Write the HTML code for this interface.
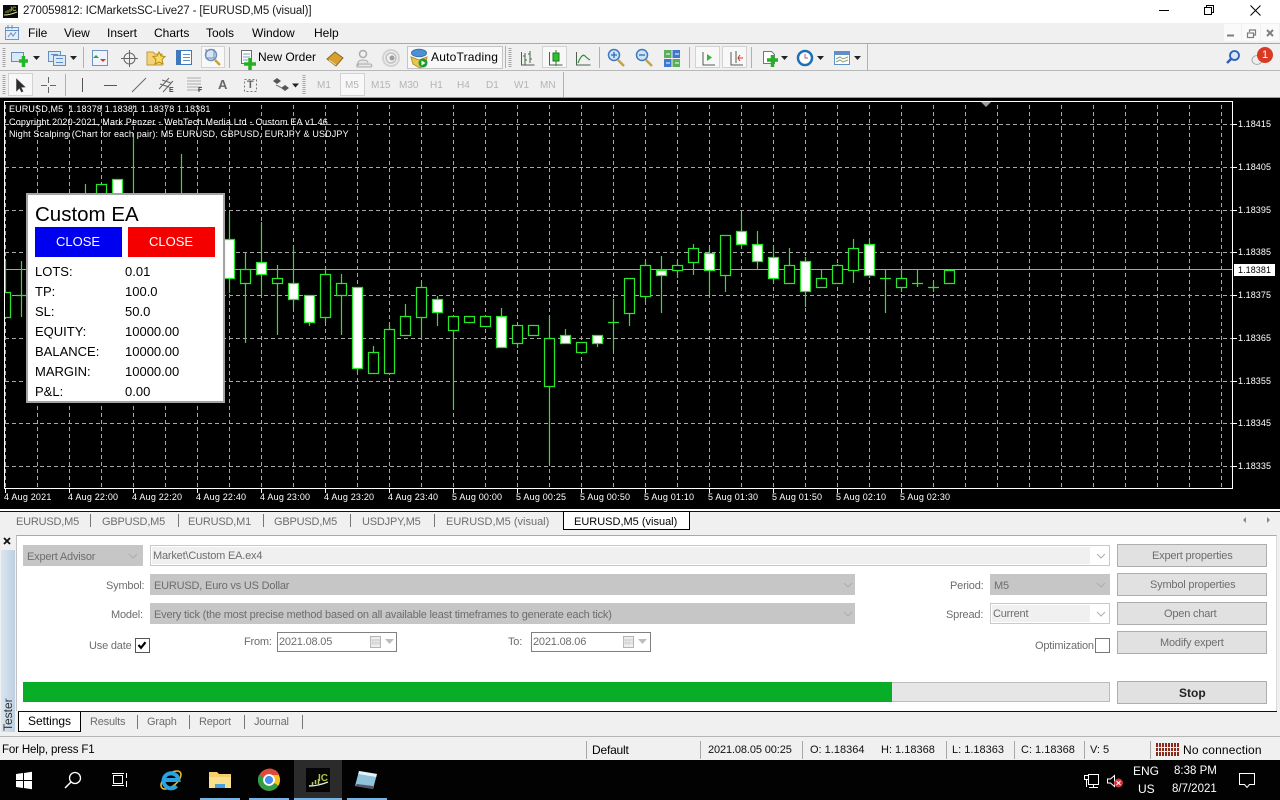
<!DOCTYPE html>
<html><head><meta charset="utf-8"><title>MT4</title>
<style>
html,body{margin:0;padding:0;background:#f0f0f0}
#p{position:relative;width:1280px;height:800px;overflow:hidden;font-family:"Liberation Sans",sans-serif;font-size:12px;color:#000;background:#f0f0f0}
#p div,#p svg{position:absolute}
i{position:absolute;font-style:normal;white-space:pre;line-height:14px}
.c{font-size:9px;color:#fff;letter-spacing:.07px}
.t{font-size:9px;color:#fff;letter-spacing:.2px}
.g{color:#6d6d6d;font-size:11px;letter-spacing:-.19px;line-height:16px}
.d{font-size:11px;color:#111;line-height:16px}
.m{color:#b4b4b4;font-size:10px}
.s{background:#c6c6c6}
.w{background:#fff;border:1px solid #c9c9c9;box-sizing:border-box}
.f{background:#f0f0f0}
.b{background:#e1e1e1;border:1px solid #adadad;box-sizing:border-box;left:1117px;width:150px;height:23px}
.v{width:1px;background:#a8a8a8}
.e{font-size:13px;color:#000;line-height:18px}
.pb{background:#f8f8f8;border:1px solid #d2d2d2;box-sizing:border-box}
</style></head><body><div id="p">

<div style="left:0;top:0;width:1280px;height:23px;background:#fff"></div>
<div style="left:0;top:43px;width:1280px;height:1px;background:#a9a9a9"></div>
<div style="left:0;top:70px;width:1280px;height:1px;background:#b9b9b9"></div>
<div style="left:0;top:97px;width:1280px;height:1px;background:#9a9a9a"></div>
<div style="left:0;top:98px;width:1280px;height:411px;background:#000"></div>
<div style="left:0;top:509px;width:1280px;height:2px;background:#fff"></div>
<div style="left:0;top:511px;width:1280px;height:1px;background:#111"></div>
<div style="left:16px;top:535px;width:1261px;height:176px;background:#fff;border-top:1px solid #a9a9a9;border-left:1px solid #c2c2c2;border-right:1px solid #dcdcdc;box-sizing:border-box"></div>
<div style="left:1px;top:550px;width:14px;height:182px;background:linear-gradient(90deg,#d9e5f1,#bfd0e2)"></div>
<div style="left:18px;top:711px;width:1259px;height:1px;background:#111"></div>
<div style="left:0;top:736px;width:1280px;height:1px;background:#b5b5b5"></div>
<div style="left:0;top:760px;width:1280px;height:40px;background:#020202"></div>

<!-- pressed buttons -->
<div class="pb" style="left:201px;top:46px;width:24px;height:22px"></div>
<div class="pb" style="left:407px;top:46px;width:96px;height:23px;border-color:#c4c4c4"></div>
<div class="pb" style="left:542px;top:46px;width:25px;height:22px"></div>
<div class="pb" style="left:695px;top:46px;width:25px;height:22px"></div>
<div class="pb" style="left:722px;top:46px;width:25px;height:22px"></div>
<div class="pb" style="left:8px;top:73px;width:25px;height:23px"></div>
<div class="pb" style="left:340px;top:73px;width:25px;height:23px"></div>
<div style="left:1224px;top:24px;width:17px;height:17px;background:#fafafa"></div>
<div style="left:1242px;top:24px;width:18px;height:17px;background:#fafafa"></div>
<div style="left:1261px;top:24px;width:18px;height:17px;background:#fafafa"></div>

<!-- chart and icons -->
<svg width="1280" height="800" viewBox="0 0 1280 800" style="left:0;top:0">
<defs><pattern id="vg" x="5" y="0" width="32" height="7" patternUnits="userSpaceOnUse"><rect x="0" y="0" width="1" height="4" fill="#a8a8a8"/></pattern></defs>
<g shape-rendering="crispEdges">
<rect x="5" y="102" width="1224" height="386" fill="url(#vg)"/>
<path d="M5 124.500H1232M5 167.500H1232M5 210.500H1232M5 252.500H1232M5 295.500H1232M5 338.500H1232M5 381.500H1232M5 423.500H1232M5 466.500H1232" stroke="#a8a8a8" stroke-dasharray="4 3" fill="none"/>
<path d="M5 269.500H1232" stroke="#a3a3a3"/>
</g>
<g fill="none" stroke="#28e628" stroke-width="1.200">
<path d="M5.500 261V292M21.500 261V317M16 295.500h11M85.500 184V200M133.500 136V200M181.500 154V200M229.500 213V293M245.500 253V343M261.500 222V295M277.500 265V335M293.500 246V308M309.500 295V326M325.500 267V322M341.500 274V335M357.500 287V373M373.500 346V373M389.500 323V373M405.500 304V335M421.500 282V338M437.500 296V326M453.500 316V409M501.500 308V347M517.500 325V348M549.500 316V464M565.500 329V343M597.500 335V347M613.500 299V350M608 322.500h11M629.500 278V326M645.500 261V302M661.500 256V313M677.500 261V278M693.500 244V275M709.500 247V295M725.500 235V292M741.500 214V249M757.500 231V270M773.500 246V283M789.500 248V283M805.500 257V307M821.500 270V287M837.500 264V283M853.500 239V283M869.500 239V278M885.500 270V313M880 278.500h11M901.500 270V292M917.500 270V287M912 283.500h11M933.500 281V292M928 287.500h11"/>
<path fill="#000" d="M0.500 292.500h10v25h-10zM96.500 184.500h10v30h-10zM240.500 269.500h10v14h-10zM272.500 278.500h10v5h-10zM320.500 274.500h10v43h-10zM336.500 283.500h10v12h-10zM368.500 352.500h10v21h-10zM384.500 329.500h10v44h-10zM400.500 316.500h10v19h-10zM416.500 287.500h10v30h-10zM448.500 316.500h10v14h-10zM464.500 316.500h10v6h-10zM480.500 316.500h10v10h-10zM512.500 325.500h10v18h-10zM528.500 325.500h10v10h-10zM544.500 338.500h10v48h-10zM576.500 342.500h10v10h-10zM624.500 278.500h10v35h-10zM640.500 265.500h10v31h-10zM672.500 265.500h10v5h-10zM688.500 248.500h10v14h-10zM720.500 235.500h10v40h-10zM784.500 265.500h10v18h-10zM816.500 278.500h10v9h-10zM832.500 265.500h10v18h-10zM848.500 248.500h10v22h-10zM896.500 278.500h10v9h-10zM944.500 270.500h10v13h-10z"/>
<path fill="#fff" d="M112.500 179.500h10v30h-10zM224.500 239.500h10v39h-10zM256.500 262.500h10v12h-10zM288.500 283.500h10v16h-10zM304.500 295.500h10v27h-10zM352.500 287.500h10v81h-10zM432.500 299.500h10v13h-10zM496.500 316.500h10v31h-10zM560.500 335.500h10v8h-10zM592.500 335.500h10v8h-10zM656.500 270.500h10v5h-10zM704.500 253.500h10v17h-10zM736.500 231.500h10v13h-10zM752.500 244.500h10v17h-10zM768.500 257.500h10v21h-10zM800.500 261.500h10v30h-10zM864.500 244.500h10v31h-10z"/>
</g>
<g shape-rendering="crispEdges">
<rect x="0" y="98" width="4" height="411" fill="#000"/>
<rect x="4.500" y="101.500" width="1228" height="387" fill="none" stroke="#fff"/>
<path d="M1233 124.500h4M1233 167.500h4M1233 210.500h4M1233 252.500h4M1233 295.500h4M1233 338.500h4M1233 381.500h4M1233 423.500h4M1233 466.500h4M5.500 489v4M69.500 489v4M133.500 489v4M197.500 489v4M261.500 489v4M325.500 489v4M389.500 489v4M453.500 489v4M517.500 489v4M581.500 489v4M645.500 489v4M709.500 489v4M773.500 489v4M837.500 489v4M901.500 489v4" stroke="#fff"/>
</g>
<path d="M981 102h10l-5 5z" fill="#9a9a9a"/>

<!-- title icon -->
<rect x="3" y="5" width="15" height="13" fill="#0a0a0a"/>
<path d="M4 15q6 0 13-3" stroke="#cfd8a0" fill="none"/>
<path d="M6 13v-2M8 13v-3M10 12V9" stroke="#8aa03a"/>
<text x="10.500" y="11" font-size="6" font-weight="bold" fill="#a8b832" font-family="Liberation Sans">IC</text>
<!-- menu icon -->
<rect x="5.500" y="27.500" width="13" height="12" fill="#e4eefa" stroke="#6f97c6"/>
<path d="M5 30.500h14M8 25v4M12 25v4M8 37l3-4 2 3 3-4" stroke="#5e8ec5" fill="none"/>

<!-- window controls -->
<g shape-rendering="crispEdges" stroke="#000" fill="none">
<path d="M1159 10.500h10"/>
<rect x="1204.500" y="7.500" width="7" height="7"/>
<path d="M1206.500 7.500v-2h7v7h-2"/>
</g>
<path d="M1250.500 5.500l10 10M1260.500 5.500l-10 10" stroke="#000" fill="none"/>
<g fill="none" stroke="#7d7d7d">
<path d="M1227 35.500h7" stroke-width="2"/>
<rect x="1247.500" y="33" width="6" height="4.500" stroke-width="1.200"/>
<path d="M1249.500 32v-2h6v5h-1.500" stroke-width="1.200"/>
<path d="M1267 30l6 6M1273 30l-6 6" stroke-width="2"/>
</g>

<!-- grippers and separators -->
<g shape-rendering="crispEdges">
<path d="M4 48v19M510 48v19M4 75v20M304 75v20" stroke="#a5a5a5" stroke-dasharray="1 1" stroke-width="3"/>
<path d="M83.500 47v21M229.500 47v21M505.500 46v22M599.500 47v21M689.500 47v21M751.500 47v21M867.500 44v26M65.500 74v22M563.500 72v25" stroke="#b0b0b0"/>
</g>

<!-- toolbar 1 -->
<rect x="11.500" y="52.500" width="12" height="9" fill="#dbe8f6" stroke="#5f8fc4"/>
<path d="M19 61h9M23.500 56v11" stroke="#26b526" stroke-width="3.500"/>
<path d="M33 56h7l-3.500 4zM70 56h7l-3.500 4z" fill="#222"/>
<rect x="48.500" y="51.500" width="12" height="10" fill="#dbe8f6" stroke="#5f8fc4"/>
<rect x="53.500" y="55.500" width="12" height="10" fill="#dbe8f6" stroke="#5f8fc4"/>
<path d="M51 54.500h7M56 58.500h7M56 62.500h7" stroke="#5f8fc4"/>
<rect x="92.500" y="50.500" width="15" height="15" fill="#eef4fb" stroke="#6e95c2"/>
<path d="M96 55l3 3h-6z" fill="#3ba03b"/><path d="M103 62l-3-3h6z" fill="#d33"/>
<circle cx="129.500" cy="58.500" r="5.500" fill="none" stroke="#666"/>
<path d="M129.500 50v17M121 58.500h17" stroke="#666"/>
<path d="M147 52h6l2 2h7v11h-15z" fill="#f3d27a" stroke="#c49a34"/>
<path d="M159 52l2 4 4 .5-3 3 1 4.500-4-2-4 2 1-4.500-3-3 4-.5z" fill="#f8dc60" stroke="#b58b16"/>
<rect x="176.500" y="50.500" width="15" height="14" fill="#fff" stroke="#3f78bd"/>
<rect x="177" y="51" width="4" height="13" fill="#3f78bd"/>
<path d="M183 54.500h7M183 57.500h7M183 60.500h7" stroke="#5f8fc4"/>
<circle cx="211" cy="55" r="5.500" fill="#d7e6f6" stroke="#6f8fb5" stroke-width="1.500"/>
<path d="M206 49v9h8v-9" fill="none" stroke="#6f8fb5"/>
<path d="M215 60l5 5" stroke="#c9a040" stroke-width="2.500"/>
<rect x="241.500" y="50.500" width="10" height="13" fill="#fff" stroke="#6d6d6d"/>
<path d="M243 54h7M243 57h7M243 60h5" stroke="#7d9fc5"/>
<path d="M244 64h12M250 58v12" stroke="#24b024" stroke-width="3.500"/>
<path d="M327 59l8-7 8 6-7 8z" fill="#d8a02d" stroke="#8a6a20"/>
<path d="M329 60l7 5" stroke="#f4dca0"/>
<circle cx="363" cy="54" r="3.500" fill="none" stroke="#aaa" stroke-width="1.500"/>
<path d="M358 66v-3q0-3 5-3t5 3M357 64h14q2 2 0 3h-14z" fill="#e6e6e6" stroke="#ababab"/>
<circle cx="391" cy="58" r="8" fill="none" stroke="#d2d2d2" stroke-width="2"/>
<circle cx="391" cy="58" r="5" fill="none" stroke="#c0c0c0" stroke-width="1.500"/>
<circle cx="392" cy="58" r="2.500" fill="#9c9c9c"/>
<!-- autotrading -->
<path d="M411 57l8 3 8-3-1 7-6 4-7-4z" fill="#e6c84e" stroke="#b8942a"/>
<ellipse cx="419" cy="53" rx="7.500" ry="3.800" fill="#4d90d1" stroke="#3a74ad"/>
<circle cx="423" cy="63" r="4.500" fill="#1e9a35"/>
<path d="M421.500 60.500v5l4-2.500z" fill="#fff"/>
<!-- charts -->
<g fill="none" stroke="#4e5f4e">
<path d="M521.500 52v13h13M525 65v-12M530 63v-12"/>
<path d="M549.500 52v13h13M576.500 52v13h14"/>
<path d="M703 52v13h12M731 52v13h12"/>
</g>
<path d="M523 56h2M525 60h2M528 54h2M530 59h2M556 50v16" stroke="#2e7d2e" fill="none"/>
<rect x="553" y="53" width="6" height="8" fill="#2fc02f" stroke="#1c7a1c"/>
<path d="M578 63q4-10 7-7t5 4" stroke="#2e8b2e" fill="none" stroke-width="1.200"/>
<circle cx="614" cy="55" r="5.500" fill="#cfe3f8" stroke="#3f78bd" stroke-width="1.500"/>
<path d="M611 55h6M614 52v6" stroke="#2d6bb5" stroke-width="1.300"/>
<path d="M618 60l6 6" stroke="#c9a040" stroke-width="2.500"/>
<circle cx="642" cy="55" r="5.500" fill="#cfe3f8" stroke="#3f78bd" stroke-width="1.500"/>
<path d="M639 55h6" stroke="#2d6bb5" stroke-width="1.300"/>
<path d="M646 60l6 6" stroke="#c9a040" stroke-width="2.500"/>
<g shape-rendering="crispEdges">
<rect x="664" y="50" width="7.500" height="8" fill="#58b058"/><rect x="672.500" y="50" width="7.500" height="8" fill="#3f78d0"/>
<rect x="664" y="59" width="7.500" height="8" fill="#3f78d0"/><rect x="672.500" y="59" width="7.500" height="8" fill="#58b058"/>
<path d="M666 54h4M675 54h4M666 63h4M675 63h4" stroke="#fff"/>
</g>
<path d="M707 54v7l5-3.500z" fill="#33b833"/>
<path d="M736 51v12" stroke="#4e5f4e"/><path d="M738 58h5M740 55l-2 3 2 3" stroke="#d23030" fill="none"/>
<path d="M763.500 51.500h8l3 3v9h-11z" fill="#fff" stroke="#777"/>
<path d="M767 60h11M772.500 55v12" stroke="#24b024" stroke-width="3.500"/>
<path d="M781 56h7l-3.500 4zM817 56h7l-3.500 4zM854 56h7l-3.500 4z" fill="#222"/>
<circle cx="805" cy="58" r="7" fill="#fff" stroke="#1f6fb5" stroke-width="2.500"/>
<path d="M805 54v4h3" stroke="#a66" fill="none"/>
<rect x="834.500" y="51.500" width="15" height="13" fill="#fff" stroke="#5f8fc4"/>
<rect x="835" y="52" width="14" height="3" fill="#5f8fc4"/>
<path d="M836 59l4-2 3 2 5-2M836 62l4-2 3 2 5-2" stroke="#8aa070" fill="none"/>
<!-- right tools -->
<circle cx="1234.500" cy="55.500" r="4.500" fill="#d4e6f8" stroke="#2f5fb5" stroke-width="1.800"/>
<path d="M1231 59l-4 4" stroke="#2f5fb5" stroke-width="2.500"/>
<ellipse cx="1257" cy="60" rx="5" ry="4.500" fill="#eee" stroke="#aaa"/>
<circle cx="1265" cy="55" r="8" fill="#d93a24"/>

<!-- toolbar 2 -->
<path d="M16.500 79l0 12 3-3 2 4 1.500-.8-2-4 4-.2z" fill="#2c2c2c" stroke="#444" stroke-width=".6"/>
<path d="M48.500 77v6M48.500 87v6M41 85.500h6M50 85.500h6" stroke="#666" shape-rendering="crispEdges"/>
<path d="M82.500 78v14M104 85.500h13" stroke="#555" shape-rendering="crispEdges"/>
<path d="M132 92l14-14" stroke="#666"/>
<path d="M159 89l10-11M163 92l10-11M160 84l9 3M162 80l9 3" stroke="#666" fill="none"/>
<path d="M187.500 78h14M187.500 81h14M187.500 84h14M187.500 87h14M187.500 90h14" stroke="#666" stroke-dasharray="1 1" shape-rendering="crispEdges"/>
<rect x="244.500" y="79.500" width="12" height="12" fill="none" stroke="#777" stroke-dasharray="2 2"/>
<path d="M273 81l4-3 4 3-4 3zM281 88l4-3 4 3-4 3z" fill="#555"/><path d="M276 85l6 3" stroke="#777"/>
<path d="M292 83.500h7l-3.500 4z" fill="#222"/>

<path d="M1246 517v6l-3-3zM1267 517v6l3-3z" fill="#888"/>
<path d="M4 538l6 6M10 538l-6 6" stroke="#111" stroke-width="1.800"/>

<!-- status icon -->
<rect x="1156" y="743" width="23" height="13" fill="#8a2a18"/>
<path d="M1158.500 743v13M1161.500 743v13M1164.500 743v13M1167.500 743v13M1170.500 743v13M1173.500 743v13M1176.500 743v13M1156 747.500h23M1156 751.500h23" stroke="#f0f0f0" shape-rendering="crispEdges"/>

<!-- taskbar -->
<rect x="294" y="760" width="48" height="40" fill="#2b2b2b"/>
<g shape-rendering="crispEdges">
<rect x="200" y="798" width="40" height="2" fill="#75b3e5"/><rect x="249" y="798" width="40" height="2" fill="#75b3e5"/>
<rect x="294" y="798" width="48" height="2" fill="#75b3e5"/><rect x="347" y="798" width="40" height="2" fill="#75b3e5"/>
</g>
<path d="M16 774l7-1v7h-7zM24 773l8-1.200V780h-8zM16 781h7v7l-7-1zM24 781h8v8.200l-8-1.200z" fill="#fff"/>
<circle cx="75" cy="778" r="5.500" fill="none" stroke="#fff" stroke-width="1.300"/>
<path d="M71 782l-6 6" stroke="#fff" stroke-width="1.500"/>
<g fill="none" stroke="#fff" shape-rendering="crispEdges">
<rect x="113.500" y="775.500" width="9" height="8"/>
<path d="M112 773.500h12M112 785.500h12M126.500 773v5M126.500 781v6"/>
</g>
<ellipse cx="171" cy="780" rx="12" ry="6" transform="rotate(-40 171 780)" fill="none" stroke="#e9b72a" stroke-width="1.600"/>
<path d="M164.500 780h14a7.500 7.500 0 1 0-2 6" fill="none" stroke="#2aa4e0" stroke-width="4"/>
<path d="M209 772h8l2 2h12v14h-22z" fill="#f5cf6a"/>
<path d="M209 777h22v11h-22z" fill="#fbe08c"/>
<path d="M215 784h10v4h-10z" fill="#4aa0dc"/>
<circle cx="269" cy="780" r="11" fill="#dd4b3a"/>
<path d="M269 780l9.500 5.500A11 11 0 0 1 263 789z" fill="#2f9e44"/>
<path d="M269 769a11 11 0 0 1 9.500 16.500L269 780z" fill="#f5c422"/>
<path d="M259 775a11 11 0 0 0 4 14l6-9z" fill="#2f9e44"/>
<path d="M259.500 775a11 11 0 0 1 18-3l2 3H269z" fill="#dd4b3a"/>
<circle cx="269" cy="780" r="5" fill="#4a8ef0" stroke="#fff" stroke-width="1.800"/>
<rect x="306" y="768" width="24" height="24" fill="#050505"/>
<path d="M309 786q9 0 19-4" stroke="#e5ead0" fill="none" stroke-width="1.400"/>
<path d="M312.500 785v-3M315.500 784v-4M318.500 784v-5" stroke="#b9c76a" stroke-width="1.500"/>
<text x="318" y="781" font-size="10" font-weight="bold" fill="#b4c13c" font-family="Liberation Sans">IC</text>
<path d="M359 771l18 3-4 15-18-3z" fill="#8fc3dd"/>
<path d="M359 771l18 3-.8 3-18-3z" fill="#e5f2f8"/>
<path d="M355 786l18 3v-3l-16-2z" fill="#556"/>
<!-- tray -->
<g fill="none" stroke="#fff" shape-rendering="crispEdges">
<rect x="1088.500" y="774.500" width="10" height="10"/>
<rect x="1084.500" y="775.500" width="4" height="4"/>
<path d="M1093.500 785v2M1089 787.500h9M1086.500 780v7"/>
<path d="M1239.500 773.500h15v11h-5l-2.500 3-2.500-3h-5z" shape-rendering="auto"/>
</g>
<path d="M1107.500 779h3l4-3.500v11l-4-3.500h-3z" fill="none" stroke="#fff"/>
<circle cx="1118.500" cy="783" r="4.500" fill="#d4343e"/>
<path d="M1116.500 781l4 4M1120.500 781l-4 4" stroke="#fff"/>
</svg>

<!-- Custom EA panel -->
<div style="left:26px;top:193px;width:199px;height:210px;background:#fff;border:2px solid #a4a4a4;box-sizing:border-box"></div>
<div style="left:35px;top:227px;width:87px;height:30px;background:#0000f0"></div>
<div style="left:128px;top:227px;width:87px;height:30px;background:#f50000"></div>
<i style="left:35px;top:203px;font-size:20.500px;line-height:24px">Custom EA</i>
<i style="left:56px;top:235px;color:#fff;font-size:13px">CLOSE</i>
<i style="left:149px;top:235px;color:#fff;font-size:13px">CLOSE</i>
<i class="e" style="left:35px;top:263px">LOTS:</i><i class="e" style="left:125px;top:263px">0.01</i>
<i class="e" style="left:35px;top:283px">TP:</i><i class="e" style="left:125px;top:283px">100.0</i>
<i class="e" style="left:35px;top:303px">SL:</i><i class="e" style="left:125px;top:303px">50.0</i>
<i class="e" style="left:35px;top:323px">EQUITY:</i><i class="e" style="left:125px;top:323px">10000.00</i>
<i class="e" style="left:35px;top:343px">BALANCE:</i><i class="e" style="left:125px;top:343px">10000.00</i>
<i class="e" style="left:35px;top:363px">MARGIN:</i><i class="e" style="left:125px;top:363px">10000.00</i>
<i class="e" style="left:35px;top:383px">P&amp;L:</i><i class="e" style="left:125px;top:383px">0.00</i>

<!-- chart text -->
<i class="c" style="left:9px;top:102px;letter-spacing:.14px">EURUSD,M5  1.18378 1.18381 1.18378 1.18381</i>
<i class="c" style="left:9px;top:115px;letter-spacing:.2px">Copyright 2020-2021, Mark Penzer - WebTech Media Ltd - Custom EA v1.46</i>
<i class="c" style="left:9px;top:127px;letter-spacing:.15px">Night Scalping (Chart for each pair): M5 EURUSD, GBPUSD, EURJPY &amp; USDJPY</i>
<i class="c" style="left:1238px;top:117px">1.18415</i>
<i class="c" style="left:1238px;top:160px">1.18405</i>
<i class="c" style="left:1238px;top:203px">1.18395</i>
<i class="c" style="left:1238px;top:245px">1.18385</i>
<i class="c" style="left:1238px;top:288px">1.18375</i>
<i class="c" style="left:1238px;top:331px">1.18365</i>
<i class="c" style="left:1238px;top:374px">1.18355</i>
<i class="c" style="left:1238px;top:416px">1.18345</i>
<i class="c" style="left:1238px;top:459px">1.18335</i>
<div style="left:1234px;top:264px;width:41px;height:12px;background:#fff"></div>
<i class="c" style="left:1238px;top:263px;color:#000">1.18381</i>
<i class="t" style="left:4px;top:490px">4 Aug 2021</i>
<i class="t" style="left:68px;top:490px">4 Aug 22:00</i>
<i class="t" style="left:132px;top:490px">4 Aug 22:20</i>
<i class="t" style="left:196px;top:490px">4 Aug 22:40</i>
<i class="t" style="left:260px;top:490px">4 Aug 23:00</i>
<i class="t" style="left:324px;top:490px">4 Aug 23:20</i>
<i class="t" style="left:388px;top:490px">4 Aug 23:40</i>
<i class="t" style="left:452px;top:490px">5 Aug 00:00</i>
<i class="t" style="left:516px;top:490px">5 Aug 00:25</i>
<i class="t" style="left:580px;top:490px">5 Aug 00:50</i>
<i class="t" style="left:644px;top:490px">5 Aug 01:10</i>
<i class="t" style="left:708px;top:490px">5 Aug 01:30</i>
<i class="t" style="left:772px;top:490px">5 Aug 01:50</i>
<i class="t" style="left:836px;top:490px">5 Aug 02:10</i>
<i class="t" style="left:900px;top:490px">5 Aug 02:30</i>

<!-- title & menu -->
<i style="left:23px;top:4px;color:#1a1a1a;font-size:11.500px;letter-spacing:-.12px">270059812: ICMarketsSC-Live27 - [EURUSD,M5 (visual)]</i>
<i style="left:28px;top:26px">File</i><i style="left:64px;top:26px">View</i><i style="left:107px;top:26px">Insert</i><i style="left:154px;top:26px">Charts</i><i style="left:206px;top:26px">Tools</i><i style="left:252px;top:26px">Window</i><i style="left:314px;top:26px">Help</i>
<i style="left:258px;top:50px">New Order</i>
<i style="left:431px;top:50px;letter-spacing:.2px">AutoTrading</i>
<i style="left:1262px;top:48px;color:#fff;font-size:11px">1</i>
<i style="left:169px;top:84px;font-size:7px;font-weight:bold;color:#444">E</i>
<i style="left:198px;top:84px;font-size:7px;font-weight:bold;color:#444">F</i>
<i style="left:218px;top:78px;font-size:13px;font-weight:bold;color:#666">A</i>
<i style="left:247px;top:78px;font-size:11px;font-weight:bold;color:#666">T</i>
<i class="m" style="left:317px;top:79px">M1</i><i class="m" style="left:345px;top:79px">M5</i><i class="m" style="left:371px;top:79px">M15</i><i class="m" style="left:399px;top:79px">M30</i><i class="m" style="left:430px;top:79px">H1</i><i class="m" style="left:457px;top:79px">H4</i><i class="m" style="left:486px;top:79px">D1</i><i class="m" style="left:514px;top:79px">W1</i><i class="m" style="left:540px;top:79px">MN</i>

<!-- tabs -->
<div style="left:563px;top:511px;width:127px;height:19px;background:#fff;border:1px solid #000;box-sizing:border-box"></div>
<i class="g" style="left:16px;top:514px">EURUSD,M5</i><i class="g" style="left:102px;top:514px">GBPUSD,M5</i><i class="g" style="left:188px;top:514px">EURUSD,M1</i><i class="g" style="left:274px;top:514px">GBPUSD,M5</i><i class="g" style="left:362px;top:514px">USDJPY,M5</i><i class="g" style="left:446px;top:514px;letter-spacing:0">EURUSD,M5 (visual)</i>
<i style="left:574px;top:514px;font-size:11px;line-height:16px">EURUSD,M5 (visual)</i>
<div class="v" style="left:90px;top:514px;height:13px;background:#777"></div><div class="v" style="left:178px;top:514px;height:13px;background:#777"></div><div class="v" style="left:263px;top:514px;height:13px;background:#777"></div><div class="v" style="left:350px;top:514px;height:13px;background:#777"></div><div class="v" style="left:434px;top:514px;height:13px;background:#777"></div>

<!-- form -->
<div class="s" style="left:23px;top:545px;width:120px;height:21px"></div>
<i class="g" style="left:27px;top:549px">Expert Advisor</i>
<div class="w" style="left:150px;top:545px;width:960px;height:21px"></div>
<div class="f" style="left:152px;top:547px;width:938px;height:17px"></div>
<i class="g" style="left:153px;top:548px">Market\Custom EA.ex4</i>
<i class="g" style="left:106px;top:578px">Symbol:</i>
<div class="s" style="left:150px;top:574px;width:705px;height:21px"></div>
<i class="g" style="left:154px;top:578px">EURUSD, Euro vs US Dollar</i>
<i class="g" style="left:111px;top:607px">Model:</i>
<div class="s" style="left:150px;top:603px;width:705px;height:21px"></div>
<i class="g" style="left:154px;top:607px">Every tick (the most precise method based on all available least timeframes to generate each tick)</i>
<i class="g" style="left:950px;top:578px">Period:</i>
<div class="s" style="left:990px;top:574px;width:120px;height:21px"></div>
<i class="g" style="left:994px;top:578px">M5</i>
<i class="g" style="left:946px;top:607px">Spread:</i>
<div class="w" style="left:990px;top:603px;width:120px;height:21px"></div>
<div class="f" style="left:992px;top:605px;width:98px;height:17px"></div>
<i class="g" style="left:993px;top:606px">Current</i>
<div class="b" style="top:544px"></div><i class="g" style="left:1152px;top:548px">Expert properties</i>
<div class="b" style="top:573px"></div><i class="g" style="left:1150px;top:577px">Symbol properties</i>
<div class="b" style="top:602px"></div><i class="g" style="left:1164px;top:606px">Open chart</i>
<div class="b" style="top:631px"></div><i class="g" style="left:1160px;top:635px">Modify expert</i>
<i class="g" style="left:89px;top:638px">Use date</i>
<div style="left:135px;top:638px;width:15px;height:15px;border:1px solid #555;box-sizing:border-box"></div>
<i class="g" style="left:244px;top:634px">From:</i>
<div style="left:277px;top:632px;width:120px;height:20px;border:1px solid #808080;box-sizing:border-box"></div>
<i class="g" style="left:279px;top:634px">2021.08.05</i>
<i class="g" style="left:508px;top:634px">To:</i>
<div style="left:531px;top:632px;width:120px;height:20px;border:1px solid #808080;box-sizing:border-box"></div>
<i class="g" style="left:533px;top:634px">2021.08.06</i>
<i class="g" style="left:1035px;top:638px">Optimization</i>
<div style="left:1095px;top:638px;width:15px;height:15px;border:1px solid #777;box-sizing:border-box"></div>
<div style="left:23px;top:682px;width:1087px;height:20px;background:#e6e6e6;border:1px solid #bcbcbc;box-sizing:border-box"></div>
<div style="left:23px;top:682px;width:869px;height:20px;background:#09ae28"></div>
<div class="b" style="top:681px"></div><i style="left:1179px;top:686px;font-weight:bold;color:#222">Stop</i>

<!-- chevrons, date icons and check mark above form -->
<svg width="1280" height="800" viewBox="0 0 1280 800" style="left:0;top:0">
<g fill="none" stroke="#adadad">
<path d="M129 554l4 4 4-4M844 583l4 4 4-4M1097 554l4 4 4-4M1097 583l4 4 4-4M1097 612l4 4 4-4M844 612l4 4 4-4"/>
</g>
<g shape-rendering="crispEdges">
<rect x="370.500" y="636.500" width="10" height="11" fill="#eee" stroke="#b5b5b5"/>
<rect x="623.500" y="636.500" width="10" height="11" fill="#eee" stroke="#b5b5b5"/>
<path d="M373 639v6M376 639v6M379 639v6M623 640h10M623 643h10M370 640h10M370 643h10M626 639v6M629 639v6" stroke="#cfcfcf"/>
</g>
<path d="M385 639h9l-4.500 5zM638 639h9l-4.500 5z" fill="#bdbdbd"/>
<path d="M138.500 645l2.500 2.800 4.500-5.600" fill="none" stroke="#000" stroke-width="2.200"/>
</svg>

<!-- bottom tabs -->
<div style="left:18px;top:711px;width:63px;height:21px;background:#fff;border:1px solid #000;border-top:0;box-sizing:border-box"></div>
<div style="left:18px;top:711px;width:1259px;height:1px;background:#111"></div>
<div style="left:81px;top:712px;width:1196px;height:20px;background:#f0f0f0"></div>
<i style="left:28px;top:714px;letter-spacing:-.05px">Settings</i>
<i class="g" style="left:90px;top:714px">Results</i><i class="g" style="left:147px;top:714px">Graph</i><i class="g" style="left:199px;top:714px">Report</i><i class="g" style="left:254px;top:714px">Journal</i>
<div class="v" style="left:137px;top:715px;height:14px;background:#777"></div><div class="v" style="left:189px;top:715px;height:14px;background:#777"></div><div class="v" style="left:244px;top:715px;height:14px;background:#777"></div><div class="v" style="left:302px;top:715px;height:14px;background:#777"></div>
<i style="left:-8px;top:708px;transform:rotate(-90deg);font-size:12px;color:#333;width:32px;text-align:center">Tester</i>

<!-- status bar -->
<i style="left:2px;top:743px;font-size:11.500px;letter-spacing:-.15px">For Help, press F1</i>
<i style="left:592px;top:743px;letter-spacing:-.2px">Default</i>
<i class="d" style="left:708px;top:742px;letter-spacing:-.12px">2021.08.05 00:25</i>
<i class="d" style="left:810px;top:742px">O: 1.18364</i>
<i class="d" style="left:881px;top:742px">H: 1.18368</i>
<i class="d" style="left:952px;top:742px">L: 1.18363</i>
<i class="d" style="left:1021px;top:742px">C: 1.18368</i>
<i class="d" style="left:1090px;top:742px">V: 5</i>
<i style="left:1183px;top:743px;letter-spacing:.15px">No connection</i>
<div class="v" style="left:586px;top:741px;height:18px"></div><div class="v" style="left:700px;top:741px;height:18px"></div><div class="v" style="left:802px;top:741px;height:18px"></div><div class="v" style="left:946px;top:741px;height:18px"></div><div class="v" style="left:1014px;top:741px;height:18px"></div><div class="v" style="left:1084px;top:741px;height:18px"></div><div class="v" style="left:1150px;top:741px;height:18px"></div>

<!-- tray text -->
<i style="left:1133px;top:764px;color:#fff">ENG</i>
<i style="left:1138px;top:782px;color:#fff">US</i>
<i style="left:1174px;top:764px;color:#fff;font-size:11.500px">8:38 PM</i>
<i style="left:1172px;top:782px;color:#fff;font-size:11.500px">8/7/2021</i>
</div></body></html>
